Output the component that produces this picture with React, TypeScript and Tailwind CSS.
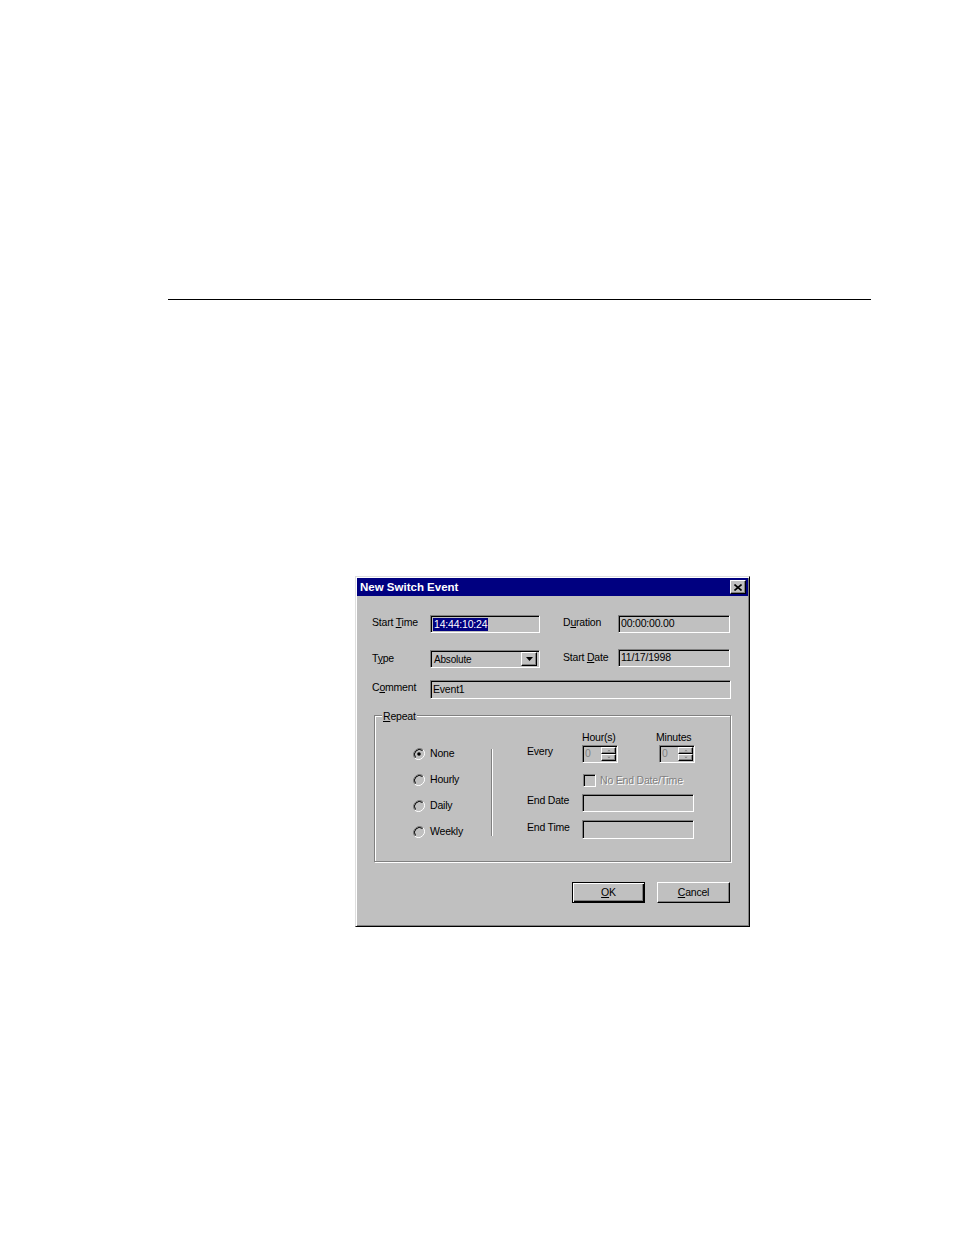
const font = "font-['Liberation_Sans',Arial,sans-serif]";
const sunken =
  "border border-t-[#808080] border-l-[#808080] border-b-white border-r-white shadow-[inset_1px_1px_0_0_#000,inset_-1px_-1px_0_0_#c0c0c0]";
const raised =
  "border border-t-white border-l-white border-b-black border-r-black shadow-[inset_-1px_-1px_0_0_#808080]";

function Acc({ pre, ch, post }: { pre?: string; ch: string; post?: string }) {
  return (
    <span>
      {pre}
      <span className="underline underline-offset-[1px]">{ch}</span>
      {post}
    </span>
  );
}

function Field({ w, h = 18, children }: { w: number; h?: number; children?: React.ReactNode }) {
  return (
    <div
      className={`${sunken} flex items-center px-[2px] bg-[#c0c0c0] text-[10.5px] text-black`}
      style={{ width: w, height: h }}
    >
      {children}
    </div>
  );
}

function Radio({ checked, label }: { checked?: boolean; label: string }) {
  return (
    <div className="flex items-center h-[26px] gap-[5px]">
      <svg width="12" height="12" viewBox="0 0 12 12">
        <path d="M10.2 1.8 A6 6 0 0 0 1.8 10.2" fill="none" stroke="#808080" strokeWidth="1" />
        <path d="M9.5 2.5 A5 5 0 0 0 2.5 9.5" fill="none" stroke="#000" strokeWidth="1" />
        <path d="M1.8 10.2 A6 6 0 0 0 10.2 1.8" fill="none" stroke="#fff" strokeWidth="1" />
        {checked && <circle cx="6" cy="6" r="1.8" fill="#000" />}
      </svg>
      <span>{label}</span>
    </div>
  );
}

function Spin({ ml = 0 }: { ml?: number }) {
  return (
    <div className={`${sunken} flex items-center h-[18px] w-[36px] bg-[#c0c0c0]`} style={{ marginLeft: ml }}>
      <span className="pl-[2px] text-[10.5px] text-[#808080] flex-1">0</span>
      <div className="flex flex-col mr-[1px]">
        {["M3 4 L5 2 L7 4", "M3 2 L5 4 L7 2"].map((d) => (
          <div key={d} className={`${raised} w-[15px] h-[7px] flex items-center justify-center`}>
            <svg width="10" height="5" viewBox="0 0 10 6">
              <path d={d} fill="#808080" />
            </svg>
          </div>
        ))}
      </div>
    </div>
  );
}

export default function App() {
  return (
    <div className={`min-h-[1235px] bg-white ${font}`}>
      <div className="pt-[299px] pl-[168px]">
        <div className="w-[703px] h-[1px] bg-black" />
      </div>

      <div className="ml-[355px] mt-[276px] w-[395px] h-[351px] bg-[#c0c0c0] border border-t-[#dfdfdf] border-l-[#dfdfdf] border-b-black border-r-black shadow-[inset_1px_1px_0_0_#fff,inset_-1px_-1px_0_0_#808080] p-[1px] text-[10.5px] tracking-[-0.2px] text-black">
        <div className="h-[18px] bg-[#000080] flex items-center justify-between pl-[3px] pr-[2px]">
          <span className="text-white font-bold text-[11.5px] tracking-normal pt-[1px]">New Switch Event</span>
          <div className={`${raised} w-[16px] h-[14px] bg-[#c0c0c0] flex items-center justify-center`}>
            <svg width="8" height="7" viewBox="0 0 8 7">
              <path d="M0.5 0.5 L7.5 6.5 M7.5 0.5 L0.5 6.5" stroke="#000" strokeWidth="1.6" />
            </svg>
          </div>
        </div>

        <div className="pl-[15px] pt-[19px]">
          <div className="flex items-center h-[18px]">
            <span className="w-[58px] -mt-[3px]">
              <Acc pre="Start " ch="T" post="ime" />
            </span>
            <Field w={110}>
              <span className="bg-[#000080] text-white leading-[13px] px-[1px]">14:44:10:24</span>
            </Field>
            <span className="w-[55px] ml-[23px] -mt-[3px]">
              <Acc pre="D" ch="u" post="ration" />
            </span>
            <Field w={112}>00:00:00.00</Field>
          </div>

          <div className="flex items-center h-[20px] mt-[15px]">
            <span className="w-[58px] mt-[1px]">
              <Acc pre="T" ch="y" post="pe" />
            </span>
            <div className={`${sunken} w-[110px] h-[18px] mt-[2px] flex items-center justify-between pl-[3px] pr-[2px] bg-[#c0c0c0]`}>
              <span className="text-[10px]">Absolute</span>
              <div className={`${raised} w-[16px] h-[14px] flex items-center justify-center`}>
                <svg width="7" height="4" viewBox="0 0 7 4">
                  <path d="M0 0 H7 L3.5 4 Z" fill="#000" />
                </svg>
              </div>
            </div>
            <span className="w-[55px] ml-[23px]">
              <Acc pre="Start " ch="D" post="ate" />
            </span>
            <Field w={112}>11/17/1998</Field>
          </div>

          <div className="flex items-center h-[19px] mt-[12px]">
            <span className="w-[58px] -mt-[3px]">
              <Acc pre="C" ch="o" post="mment" />
            </span>
            <Field w={301} h={19}>Event1</Field>
          </div>

          <div className="relative ml-[2px] mt-[16px] w-[357px] h-[147px] border border-[#808080] shadow-[1px_1px_0_0_#fff,inset_1px_1px_0_0_#fff]">
            <span className="absolute -top-[7px] left-[7px] bg-[#c0c0c0] px-[1px]">
              <Acc ch="R" post="epeat" />
            </span>

            <div className="flex items-start">
              <div className="ml-[38px] mt-[25px] w-[78px]">
                <Radio checked label="None" />
                <Radio label="Hourly" />
                <Radio label="Daily" />
                <Radio label="Weekly" />
              </div>

              <div className="mt-[33px] w-[1px] h-[87px] bg-[#808080] shadow-[1px_0_0_0_#fff]" />

              <div className="ml-[35px] mt-[15px]">
                <div className="flex items-start">
                  <span className="w-[55px] mt-[13px]">Every</span>
                  <div className="flex flex-col">
                    <span className="h-[14px] leading-[13px]">Hour(s)</span>
                    <Spin />
                  </div>
                  <div className="flex flex-col ml-[38px]">
                    <span className="h-[14px] leading-[13px]">Minutes</span>
                    <Spin ml={3} />
                  </div>
                </div>

                <div className="flex items-center mt-[11px] ml-[56px] h-[13px] gap-[4px]">
                  <div className={`${sunken} w-[13px] h-[13px] bg-[#c0c0c0]`} />
                  <span className="text-[#808080] [text-shadow:1px_1px_0_#fff]">No End Date/Time</span>
                </div>

                <div className="flex items-center mt-[7px]">
                  <span className="w-[55px] -mt-[4px]">End Date</span>
                  <Field w={112} />
                </div>

                <div className="flex items-center mt-[8px]">
                  <span className="w-[55px] -mt-[4px]">End Time</span>
                  <Field w={112} h={19} />
                </div>
              </div>
            </div>
          </div>

          <div className="flex justify-end gap-[12px] mt-[20px] pr-[18px]">
            <button className="w-[73px] h-[21px] border border-black shadow-[inset_1px_1px_0_0_#fff,inset_-1px_-1px_0_0_#000,inset_-2px_-2px_0_0_#808080] bg-[#c0c0c0] flex items-center justify-center">
              <Acc ch="O" post="K" />
            </button>
            <button className={`${raised} w-[73px] h-[21px] bg-[#c0c0c0] flex items-center justify-center`}>
              <Acc ch="C" post="ancel" />
            </button>
          </div>
        </div>
      </div>
    </div>
  );
}
